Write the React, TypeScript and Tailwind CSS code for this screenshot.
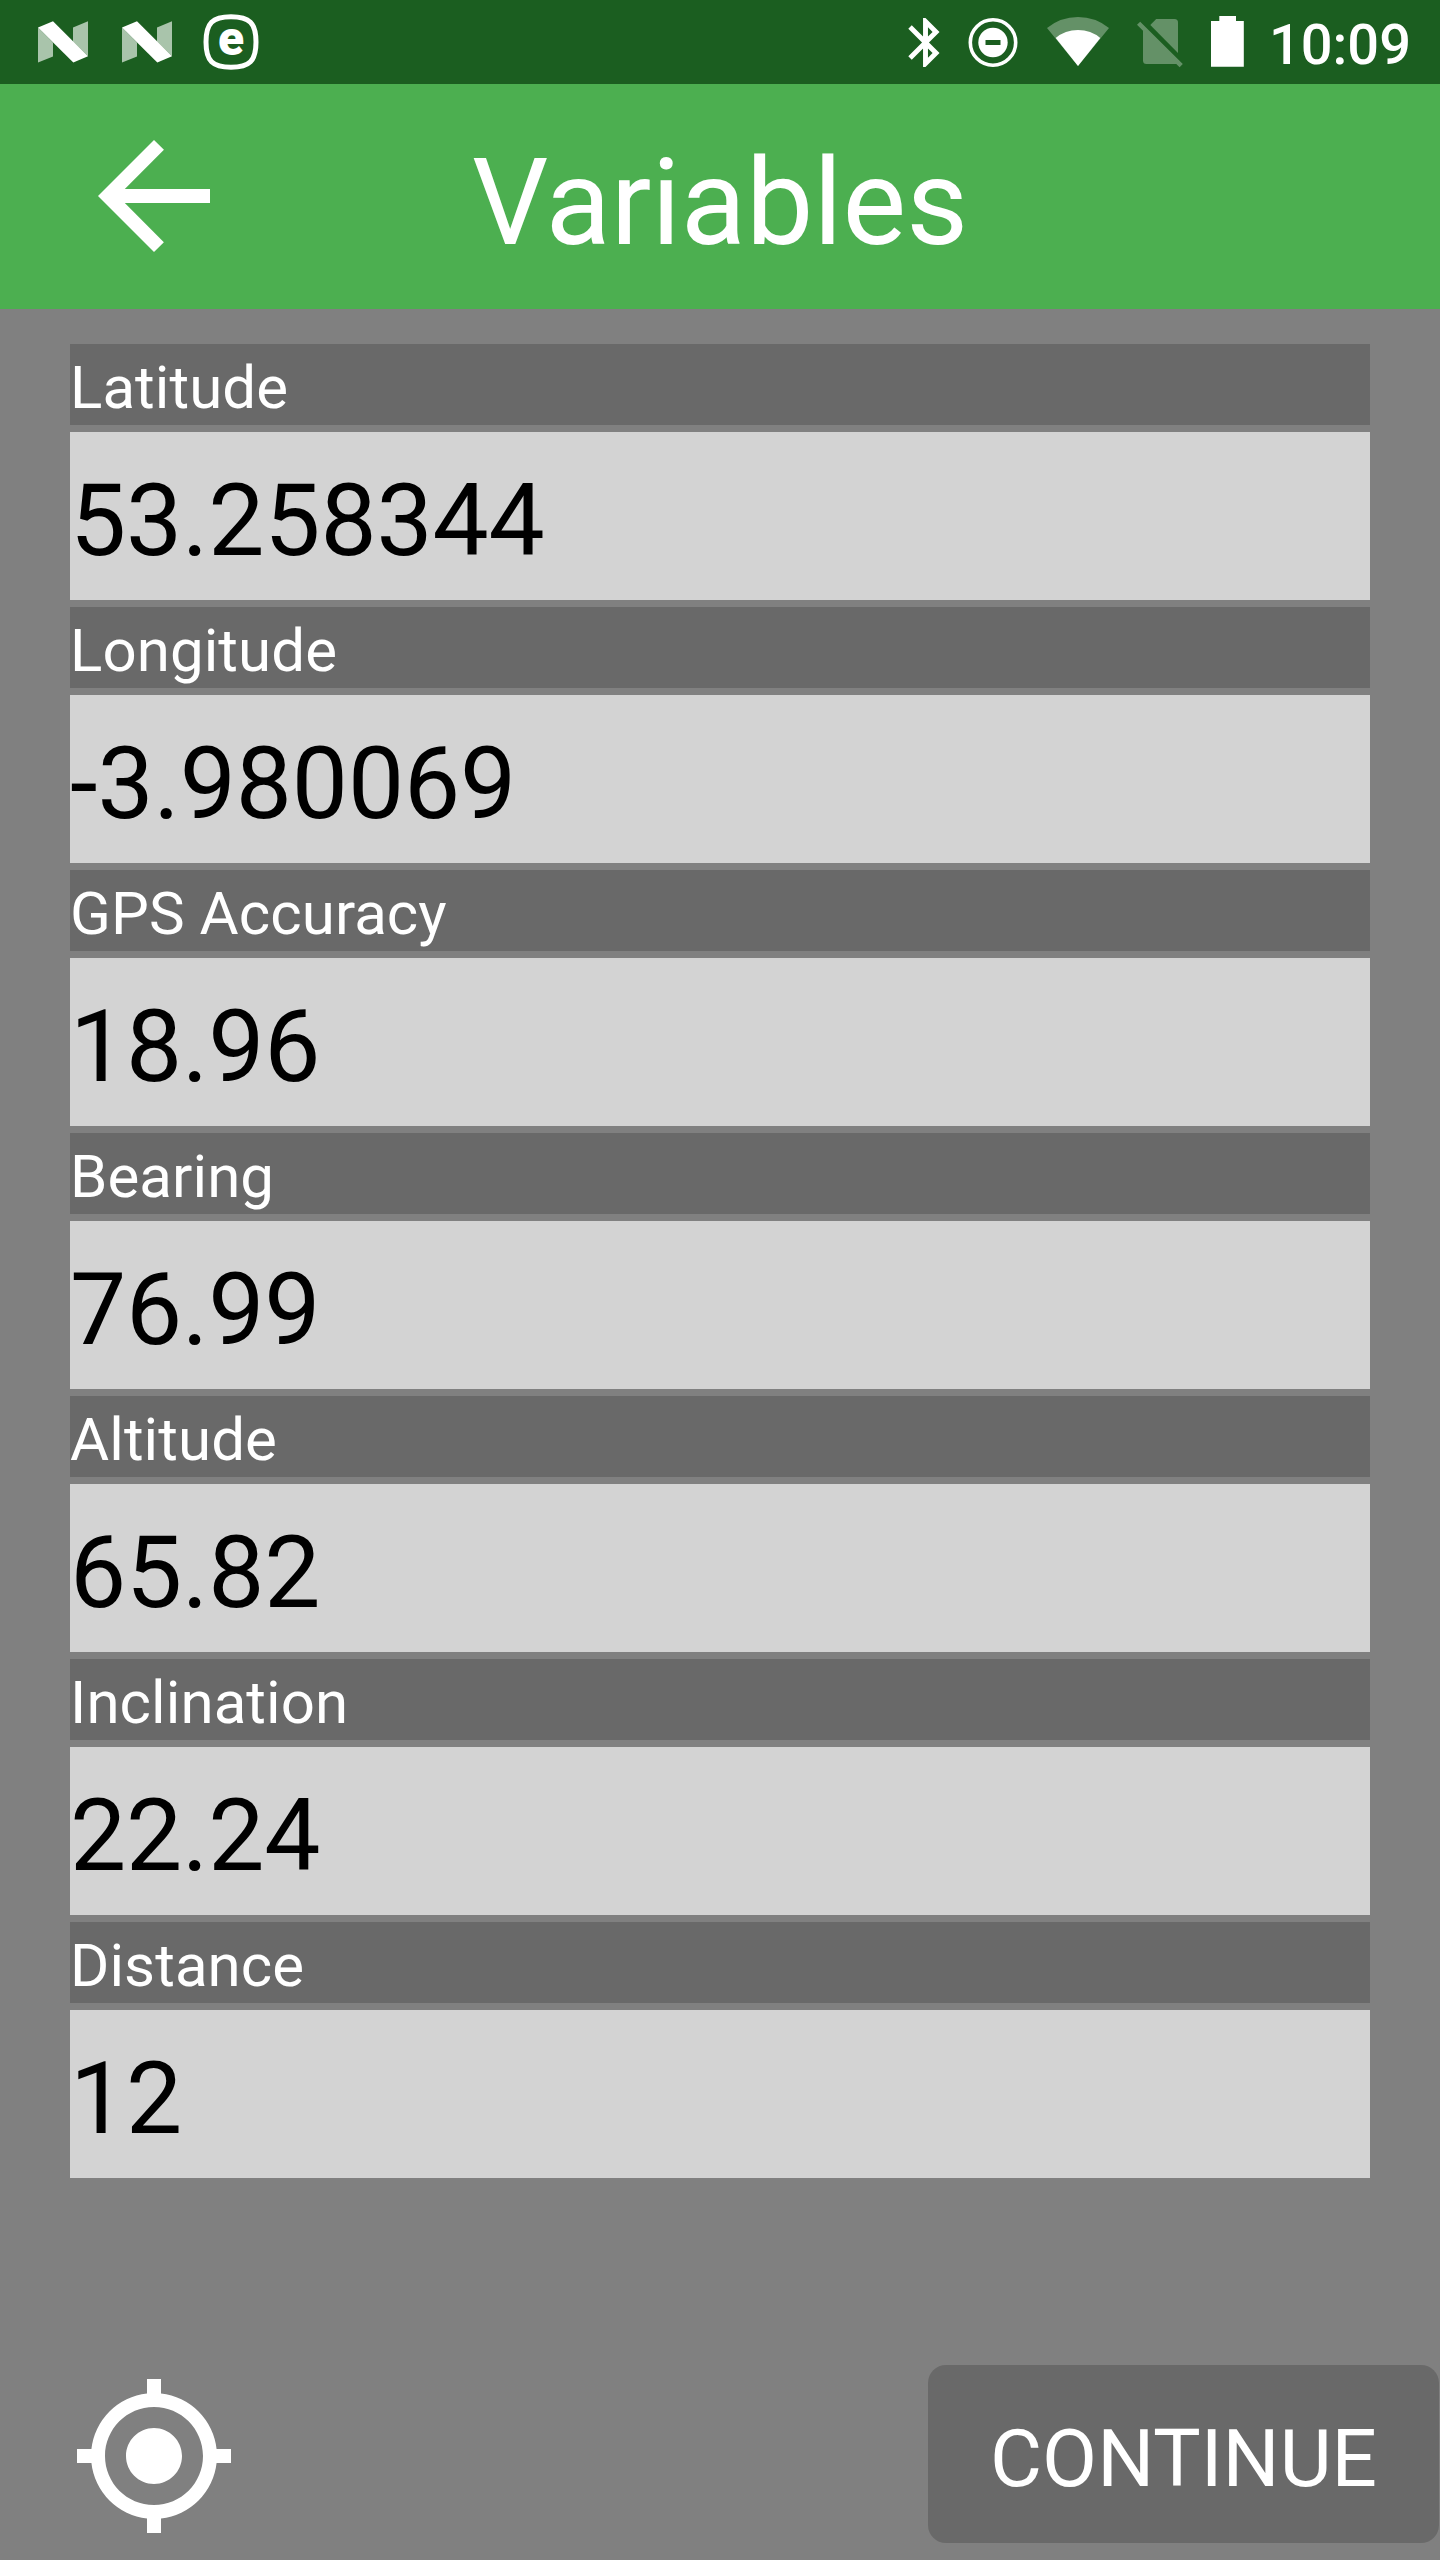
import { MdArrowBack, MdBluetooth, MdMyLocation } from 'react-icons/md'

interface IVariable {
  name: string
  value: string
}

const variables: IVariable[] = [
  { name: 'Latitude', value: '53.258344' },
  { name: 'Longitude', value: '-3.980069' },
  { name: 'GPS Accuracy', value: '18.96' },
  { name: 'Bearing', value: '76.99' },
  { name: 'Altitude', value: '65.82' },
  { name: 'Inclination', value: '22.24' },
  { name: 'Distance', value: '12' },
]

const NougatIcon = () => (
  <svg className="mr-[34px] h-[84px] w-[50px] shrink-0" viewBox="0 0 50 84">
    <path d="M0 27.5V62.5L15 56.5V42.5Z" fill="#a9c4ab" />
    <path d="M35 27.5L50 21.3V56.2L35 41.5Z" fill="#a9c4ab" />
    <path d="M0 27.5L15 21.3L50 56.2L35.3 62.5Z" fill="#fff" />
  </svg>
)

const EsetIcon = () => (
  <svg className="-ml-[3px] h-[84px] w-[56px] shrink-0" viewBox="0 0 56 84">
    <path
      d="M28 16.7C46.5 16.7 53 23 53 42S46.5 67.3 28 67.3S3 61 3 42S9.5 16.7 28 16.7Z"
      fill="none"
      stroke="#fff"
      strokeWidth="5"
    />
    <text
      x="28"
      y="54.7"
      textAnchor="middle"
      fill="#fff"
      className="font-[Roboto] text-[48px] font-black"
    >
      e
    </text>
  </svg>
)

const DoNotDisturbIcon = () => (
  <svg className="ml-[13px] h-[84px] w-[50px] shrink-0" viewBox="0 0 50 84">
    <circle cx="25" cy="42.5" r="22.7" fill="none" stroke="#fff" strokeWidth="3.6" />
    <circle cx="25" cy="42.5" r="14.7" fill="#fff" />
    <path d="M17.5 40H32.5V45H17.5Z" fill="#1b5e20" />
  </svg>
)

const WifiIcon = () => (
  <svg className="ml-[29px] h-[84px] w-[62px] shrink-0" viewBox="0 0 62 84">
    <path d="M0 28Q13.5 17 31 17T62 28L31 66Z" fill="#649167" />
    <path d="M8.7 38Q18 30 31 30T53.3 38L31 66Z" fill="#fff" />
  </svg>
)

const NoSimIcon = () => (
  <svg className="ml-[28px] h-[84px] w-[46px] shrink-0" viewBox="0 0 46 84" fill="#649167">
    <path d="M13.3 25L19.2 19H37.5A3.5 3.5 0 0 1 41 22.5V53Z" />
    <path d="M0 24.7L3.2 21.7L45.8 64L42.6 67.3L39.3 64H9.5A3.5 3.5 0 0 1 6 60.5V30.7Z" />
  </svg>
)

const BatteryIcon = () => (
  <svg className="ml-[28px] h-[84px] w-[33px] shrink-0" viewBox="0 0 33 84">
    <path d="M8.3 16H25V21H32.8V66.7H0V21H8.3Z" fill="#fff" />
  </svg>
)

const StatusBar = () => (
  <div className="flex h-[84px] items-center justify-between bg-[#1b5e20] pr-[29px] pl-[38px]">
    <div className="flex items-center">
      <NougatIcon />
      <NougatIcon />
      <EsetIcon />
    </div>
    <div className="flex items-center">
      <MdBluetooth className="h-[59px] w-[59px]" />
      <DoNotDisturbIcon />
      <WifiIcon />
      <NoSimIcon />
      <BatteryIcon />
      <span className="ml-[25px] h-[84px] pt-[3px] text-[56px] leading-[84px] font-medium">10:09</span>
    </div>
  </div>
)

const Header = () => (
  <header className="flex h-[225px] items-start bg-[#4caf50] px-[70px] pt-[28px]">
    <MdArrowBack className="h-[168px] w-[168px] shrink-0" />
    <h1 className="flex-1 pt-[31px] pr-[168px] text-center text-[120px] leading-[120px]">
      Variables
    </h1>
  </header>
)

const VariableRow = ({ variable }: { variable: IVariable }) => (
  <>
    <dt className="h-[81px] bg-[#696969] pt-[6px] text-[60px] leading-[75px] tracking-[0.08px] whitespace-nowrap">
      {variable.name}
    </dt>
    <dd className="h-[168px] bg-[#d3d3d3] pt-[10px] text-[100px] leading-[158px] tracking-[-0.15px] text-black">
      {variable.value}
    </dd>
  </>
)

export default function App() {
  return (
    <div className="flex h-[2560px] w-[1440px] flex-col overflow-hidden bg-[#808080] font-[Roboto,sans-serif] text-white">
      <StatusBar />
      <Header />
      <dl className="mx-[70px] mt-[35px] flex flex-col gap-[7px]">
        {variables.map((v) => (
          <VariableRow key={v.name} variable={v} />
        ))}
      </dl>
      <footer className="mt-auto flex items-center justify-between pr-px pb-[17px] pl-[70px]">
        <MdMyLocation className="mt-[4px] h-[168px] w-[168px]" />
        <button className="h-[178px] w-[511px] rounded-[18px] bg-[#696969] pt-[9px] text-[80px] leading-none">
          CONTINUE
        </button>
      </footer>
    </div>
  )
}
